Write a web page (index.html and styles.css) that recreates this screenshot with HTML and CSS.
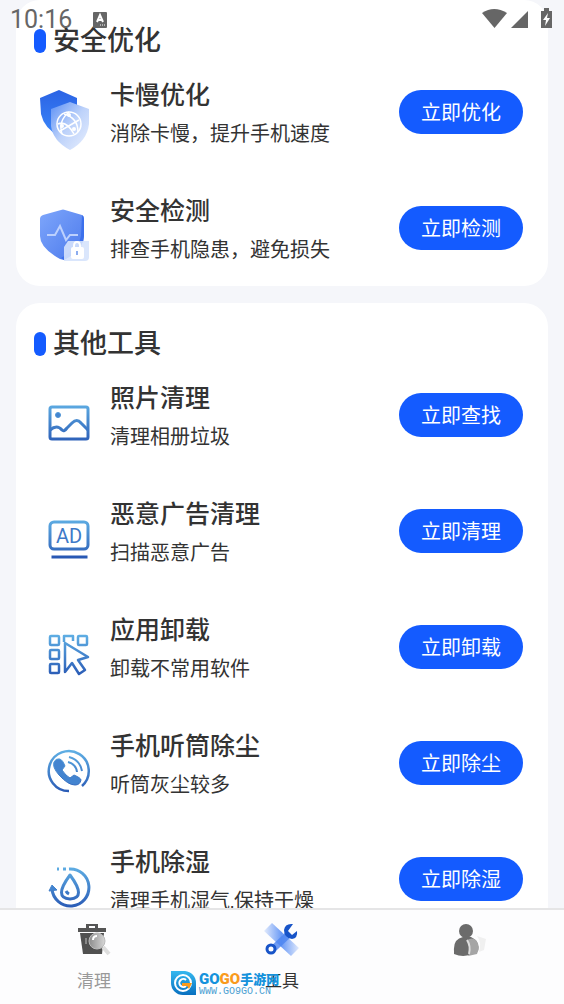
FILE: index.html
```html
<!DOCTYPE html>
<html lang="zh-CN">
<head>
<meta charset="utf-8">
<meta name="viewport" content="width=device-width, initial-scale=1">
<title>工具</title>
<link rel="stylesheet" href="styles.css">
</head>
<body>
<svg class="defs" width="0" height="0" aria-hidden="true">
  <defs>
    <linearGradient id="line" gradientUnits="userSpaceOnUse" x1="0" y1="8" x2="0" y2="52"><stop offset="0" stop-color="#61b2e6"/><stop offset="1" stop-color="#2858b4"/></linearGradient>
    <linearGradient id="deep" x1="0" y1="0" x2="0" y2="1"><stop offset="0" stop-color="#2b63e4"/><stop offset="1" stop-color="#3a86fa"/></linearGradient>
    <linearGradient id="pale" x1="0" y1="0" x2="1" y2="1"><stop offset="0" stop-color="#5c90f5"/><stop offset=".5" stop-color="#bdd2fa"/><stop offset="1" stop-color="#e8effe"/></linearGradient>
    <linearGradient id="soft" x1="0" y1="0" x2="1" y2="1"><stop offset="0" stop-color="#7ea6fb"/><stop offset="1" stop-color="#4b79ec"/></linearGradient>
    <linearGradient id="bar" x1="0" y1="0" x2="1" y2="0"><stop offset="0" stop-color="#e3ebfc"/><stop offset=".5" stop-color="#6a9af6"/><stop offset="1" stop-color="#e0e9fc"/></linearGradient>
    <linearGradient id="glass" x1="0" y1="0" x2="1" y2="0"><stop offset="0" stop-color="#8d8d8d"/><stop offset="1" stop-color="#d6d6d6"/></linearGradient>
    <linearGradient id="badge" x1="0" y1="0" x2="0" y2="1"><stop offset="0" stop-color="#35b8ef"/><stop offset="1" stop-color="#0870c0"/></linearGradient>
  </defs>
</svg>

<div class="app">
  <header class="status">
    <span class="clock">10:16</span>
    <svg class="status-app" width="16" height="18" viewBox="0 0 16 18"><rect x="1" y="1" width="14" height="16" rx="1" fill="#666"/><path d="M5 11 8 4l3 7M6 9h4" fill="none" stroke="#fff" stroke-width="2"/><path d="M8 14h1m1 0h1m1 0h1" stroke="#fff"/></svg>
    <svg class="status-signals" width="72" height="24" viewBox="0 0 72 24"><path d="M0 5Q12-3 25 5L12.500 20Z" fill="#666"/><path d="M46 3v17H29Z" fill="#666"/><path d="M59 3h3V0h5v3h3v17H59Z" fill="#666"/><path d="m66 5-5 7h3l-1 6 5-8h-3Z" fill="#fff"/></svg>
  </header>

  <main class="content">
    <section class="card">
      <h2 class="card-title">安全优化</h2>
      <div class="row">
        <svg class="icon" viewBox="0 0 60 60"><path d="M23 0 41 8V26Q38 39 23 46 8 38 5 24L4 8Z" fill="url(#deep)"/><path d="M34 12 53 19V34Q51 51 34 60 17 51 15 36V19Z" fill="url(#pale)"/><g fill="none" stroke="#fff" stroke-width="1.500"><circle cx="33" cy="34" r="12"/><path d="M33 22Q22 31 26 44M28 24Q42 28 42 42M22 34Q30 30 38 44M24 41 43 30"/></g><g fill="#fff"><circle cx="33" cy="25" r="2"/><circle cx="26" cy="36" r="2"/><circle cx="38" cy="39" r="2"/></g></svg>
        <div class="text"><h3>卡慢优化</h3><p>消除卡慢，提升手机速度</p></div>
        <button class="action" type="button">立即优化</button>
      </div>
      <div class="row">
        <svg class="icon" viewBox="0 0 60 60"><path d="M25 4Q27 3 29 4L46 9Q48 10 48 13V30Q48 43 28 54L24 53Q4 42 4 30V13Q4 10 7 9Z" fill="url(#soft)"/><path d="M46 9Q48 10 48 13V30Q48 43 28 54L25 52Q44 41 45 30Z" fill="#3c70ec"/><path d="M11 29h8l5-9 6 14 4-5h8" fill="none" stroke="#bcd0fd" stroke-width="2"/><path d="M32 35h21v16q0 4-4 4H28V41Z" fill="#d6e3fc" opacity=".9"/><path d="M38 43v-3q0-4 3-4t3 4v3" fill="none" stroke="#fff" stroke-width="2"/><rect x="35" y="41" width="13" height="12" rx="2" fill="#fff"/><path d="M41 45v4" stroke="#8bacef" stroke-width="2"/></svg>
        <div class="text"><h3>安全检测</h3><p>排查手机隐患，避免损失</p></div>
        <button class="action" type="button">立即检测</button>
      </div>
    </section>

    <section class="card">
      <h2 class="card-title">其他工具</h2>
      <div class="row">
        <svg class="icon line-icon" viewBox="0 0 60 60"><rect x="14" y="14" width="38" height="32" rx="2"/><circle cx="22" cy="22" r="2.500" class="solid"/><path d="M14 37q7-6 12 0 2 2 5-2l5-5q5-5 9 0l7 7"/></svg>
        <div class="text"><h3>照片清理</h3><p>清理相册垃圾</p></div>
        <button class="action" type="button">立即查找</button>
      </div>
      <div class="row">
        <svg class="icon line-icon" viewBox="0 0 60 60"><rect x="14" y="13" width="38" height="27" rx="4"/><path d="M15.500 48h36" stroke="#2858b4"/><text x="33" y="34" text-anchor="middle" class="ad">AD</text></svg>
        <div class="text"><h3>恶意广告清理</h3><p>扫描恶意广告</p></div>
        <button class="action" type="button">立即清理</button>
      </div>
      <div class="row">
        <svg class="icon line-icon" viewBox="0 0 60 60"><g stroke-width="2.500"><rect x="14" y="11" width="9" height="9" rx="1"/><path d="M28 17v-6h9v5"/><rect x="42" y="11" width="9" height="9" rx="1"/><rect x="14" y="25" width="9" height="9" rx="1"/><rect x="14" y="39" width="9" height="9" rx="1"/><path d="M29 18v29l7-9 7 11 6-4-7-10 10-3Z"/></g></svg>
        <div class="text"><h3>应用卸载</h3><p>卸载不常用软件</p></div>
        <button class="action" type="button">立即卸载</button>
      </div>
      <div class="row">
        <svg class="icon line-icon" viewBox="0 0 60 60"><path d="M33 50A20 20 0 1 1 46 45" stroke-width="2.500"/><path class="solid" d="M24 18q-4-1-6 3-2 5 5 13 9 10 16 10 5 0 6-5 0-2-7-5l-4 3q-4-2-8-8l3-4q-2-6-5-7Z"/><path d="M32 21q8 2 9 10M33 16q11 3 13 14" stroke-width="2"/></svg>
        <div class="text"><h3>手机听筒除尘</h3><p>听筒灰尘较多</p></div>
        <button class="action" type="button">立即除尘</button>
      </div>
      <div class="row">
        <svg class="icon line-icon" viewBox="0 0 60 60"><path d="M33 12A18.500 18.500 0 1 1 16 32M21 12h2m4 0h3"/><path d="m13 34 3-6 5 5Z" class="solid"/><path d="M34 18q-17 23 0 24 17-1 0-24ZM30 34q1 2 3 3"/></svg>
        <div class="text"><h3>手机除湿</h3><p>清理手机湿气,保持干燥</p></div>
        <button class="action" type="button">立即除湿</button>
      </div>
    </section>
  </main>

  <nav class="tabs">
    <a class="tab" href="#clean">
      <svg class="tab-icon" viewBox="0 0 40 34"><path d="M12 1h12v4h8v4H4V5h8Zm3 2v2h6V3Z" fill="#555" fill-rule="evenodd"/><path d="M6 10h24l-2 21H9Z" fill="#505050"/><path d="M12 15v6" stroke="#888" stroke-width="2"/><path d="m29 24 6 7" stroke="#ddd" stroke-width="4"/><circle cx="23" cy="18" r="8" fill="url(#glass)" stroke="#bbb"/><path d="M19 17q0-4 4-4" fill="none" stroke="#fff" stroke-width="2"/></svg>
      <span>清理</span>
    </a>
    <a class="tab active" href="#tools">
      <svg class="tab-icon" viewBox="0 0 40 34"><path d="m10 0 27 25-8 8L2 8Z" fill="url(#bar)"/><path d="M12 25 26 12" stroke="#4c85f2" stroke-width="7" opacity=".8"/><path d="M31 1q-8-1-9 6 0 8 8 9 6-1 5-8l-5 4-4-4Z" fill="#1854c8"/><circle cx="9" cy="26" r="4" fill="none" stroke="#1854c8" stroke-width="3"/></svg>
      <span>工具</span>
    </a>
    <a class="tab" href="#me" aria-label="我的">
      <svg class="tab-icon" viewBox="0 0 40 34"><circle cx="16" cy="8" r="7" fill="#6b6b6b"/><path d="M4 28q-1-12 9-14h8q9 4 7 14-12 8-24 3Z" fill="#6b6b6b"/><path d="M17 17q5-3 9 0 5 6 1 14l-9 2q4-6-1-16Z" fill="#a5a5a5"/><path d="M17 17q4 6 2 14" fill="none" stroke="#ddd" stroke-width="2"/><path d="M27 13 36 16 34 27 29 29Q32 20 27 13Z" fill="#f0f0f0"/></svg>
    </a>
    <div class="mark">
      <svg width="27" height="26" viewBox="0 0 27 26"><path d="M1 1H15A12 12 0 0 1 26 13V25H13A12 12 0 0 1 1 13Z" fill="url(#badge)"/><circle cx="13" cy="13" r="8" fill="none" stroke="#fff" stroke-width="2"/><path d="M16 10a4 4 0 1 0 0 6" fill="none" stroke="#fff" stroke-width="2"/><path d="M12 13h10l-3 6-2-3h-5Z" fill="#f99a1c"/></svg>
      <div>
        <div class="mark-name"><b>GO</b><b class="orange">GO</b><span>手游网</span></div>
        <div class="mark-url">WWW.GO9GO.CN</div>
      </div>
    </div>
  </nav>
</div>
</body>
</html>
```
FILE: styles.css
```css
* { box-sizing: border-box; }
body {
  margin: 0;
  background: #f5f6fa;
  color: #333;
  font-family: Roboto, "Noto Sans CJK SC", sans-serif;
}
h2, h3, p { margin: 0; }
.defs { position: absolute; }
.app {
  position: relative;
  display: flex;
  flex-direction: column;
  height: 100vh;
  overflow: hidden;
}

/* Status bar floats over the scrolled list */
.status {
  position: absolute;
  inset: 0 0 auto;
  z-index: 2;
  display: flex;
  align-items: center;
  height: 40px;
  padding: 0 10px;
  color: #666;
}
.clock { font-size: 25px; line-height: 40px; }
.status-app { margin-left: 20px; }
.status-signals { margin-left: auto; }

.content {
  flex: 1;
  min-height: 0;
  display: flex;
  flex-direction: column;
  gap: 17px;
  padding: 0 16px;
  overflow: hidden;
}
.card {
  flex: none;
  padding: 28px 25px 0 18px;
  border-radius: 24px;
  background: #fff;
}
.card-title {
  display: flex;
  align-items: center;
  gap: 7px;
  font-size: 27px;
  font-weight: 500;
  line-height: 26px;
}
.card-title::before {
  content: "";
  width: 12px;
  height: 24px;
  border-radius: 6px;
  background: #145bff;
}
.row {
  display: flex;
  align-items: center;
  height: 116px;
}
.icon {
  flex: none;
  width: 60px;
  height: 60px;
  margin: 16px 14px 0 2px;
}
.line-icon {
  fill: none;
  stroke: url(#line);
  stroke-width: 3;
  stroke-linejoin: round;
}
.line-icon .solid { fill: #4384d0; stroke-width: 1; }
.line-icon .ad {
  font: 400 20px Roboto, sans-serif;
  fill: #3d79c8;
  stroke: none;
}
.text {
  flex: 1;
  min-width: 0;
  padding-top: 6px;
}
.text h3 {
  font-size: 25px;
  font-weight: 500;
  line-height: 38px;
}
.text p {
  font-size: 20px;
  line-height: 38px;
  white-space: nowrap;
}
.action {
  flex: none;
  height: 44px;
  padding: 0 22px;
  border: 0;
  border-radius: 22px;
  background: #145bff;
  color: #fff;
  font: 20px/44px "Noto Sans CJK SC", sans-serif;
}

.tabs {
  position: relative;
  flex: none;
  display: grid;
  grid-template-columns: repeat(3, 1fr);
  height: 96px;
  border-top: 2px solid #e5e5e6;
  background: #fdfdfe;
}
.tab {
  display: flex;
  flex-direction: column;
  align-items: center;
  gap: 12px;
  padding-top: 13px;
  color: #999;
  font-size: 17px;
  line-height: 24px;
  text-decoration: none;
}
.tab.active { color: #333; }
.tab-icon { width: 40px; height: 34px; }

/* Site badge laid over the tab bar */
.mark {
  position: absolute;
  left: 170px;
  bottom: 8px;
  display: flex;
  align-items: center;
  gap: 2px;
}
.mark-name {
  display: flex;
  align-items: center;
  height: 18px;
  color: #1592dc;
  font: 900 13px/18px "Noto Sans CJK SC", sans-serif;
}
.mark-name b { font: 900 15px/18px Roboto, sans-serif; }
.mark-name .orange { color: #f99a1c; }
.mark-url {
  color: #4b9fd2;
  font: 10px/8px "Liberation Mono", monospace;
}
```
